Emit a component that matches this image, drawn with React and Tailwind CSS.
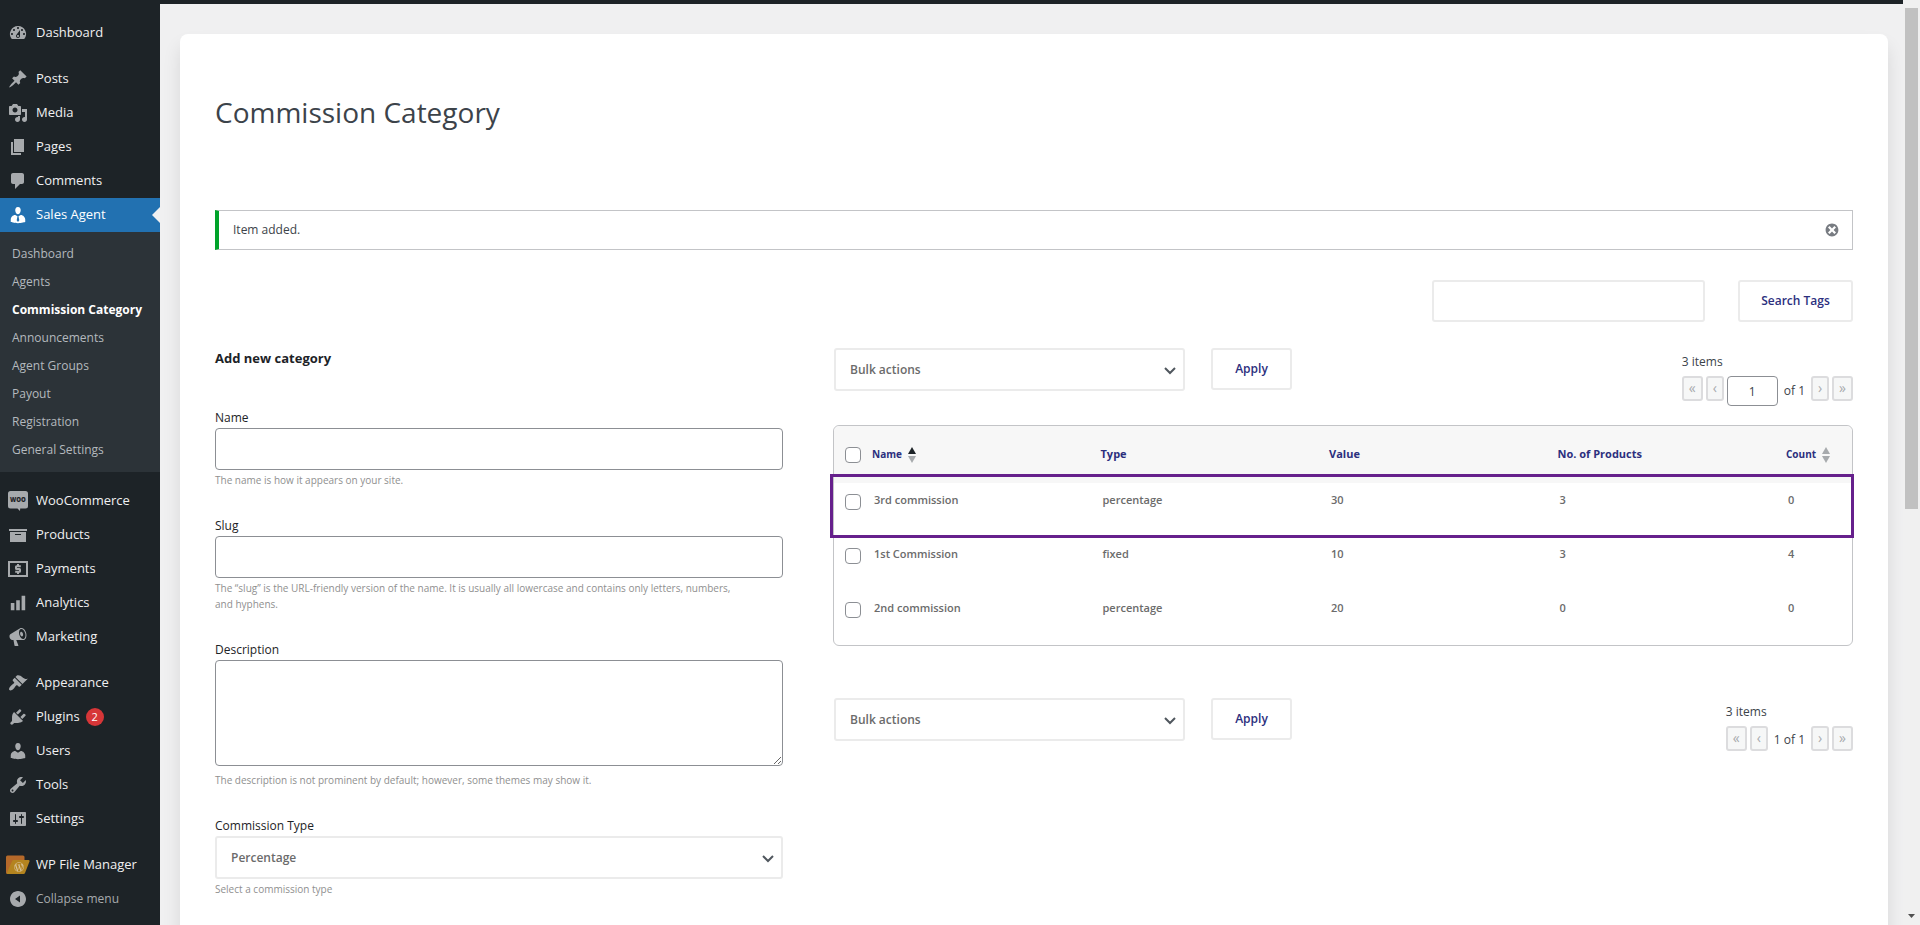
import React, { useState } from 'react';
import { FaWordpressSimple } from 'react-icons/fa';

const ICONS = {
  dashboard: 'M3.76 16h12.48A7.998 7.998 0 0 0 10 3a7.998 7.998 0 0 0-6.24 13zM10 4c.55 0 1 .45 1 1s-.45 1-1 1-1-.45-1-1 .45-1 1-1zM6 6c.55 0 1 .45 1 1s-.45 1-1 1-1-.45-1-1 .45-1 1-1zm8 0c.55 0 1 .45 1 1s-.45 1-1 1-1-.45-1-1 .45-1 1-1zm-5.37 5.55L12 7v6c0 1.1-.9 2-2 2s-2-.9-2-2c0-.57.24-1.08.63-1.45zM4 10c.55 0 1 .45 1 1s-.45 1-1 1-1-.45-1-1 .45-1 1-1zm12 0c.55 0 1 .45 1 1s-.45 1-1 1-1-.45-1-1 .45-1 1-1zm-5 3c0-.55-.45-1-1-1s-1 .45-1 1 .45 1 1 1 1-.45 1-1z',
  post: 'M10.44 3.02l1.82-1.82 6.36 6.35-1.83 1.82c-1.05-.68-2.48-.57-3.41.36l-.75.75c-.92.93-1.04 2.35-.35 3.41l-1.83 1.82-2.41-2.41-2.8 2.79c-.42.42-3.38 2.71-3.8 2.29s1.86-3.39 2.28-3.81l2.79-2.79L4.1 9.36l1.83-1.82c1.05.69 2.48.57 3.4-.36l.75-.75c.93-.92 1.05-2.35.36-3.41z',
  media: 'M13 11V4c0-.55-.45-1-1-1h-1.67L9 1H5L3.67 3H2c-.55 0-1 .45-1 1v7c0 .55.45 1 1 1h10c.55 0 1-.45 1-1zM7 4.5c1.38 0 2.5 1.12 2.5 2.5S8.38 9.5 7 9.5 4.5 8.38 4.5 7 5.62 4.5 7 4.5zM14 6h5v10.5c0 1.38-1.12 2.5-2.5 2.5S14 17.88 14 16.5s1.12-2.5 2.5-2.5c.17 0 .34.02.5.05V9h-3V6zm-4 8.05V13h2v3.5c0 1.38-1.12 2.5-2.5 2.5S7 17.88 7 16.5 8.12 14 9.5 14c.17 0 .34.02.5.05z',
  page: 'M6 15V2h10v13H6zm-1 1h8v2H3V5h2v11z',
  comments: 'M5 2h9c1.1 0 2 .9 2 2v7c0 1.1-.9 2-2 2h-2l-5 5v-5H5c-1.1 0-2-.9-2-2V4c0-1.1.9-2 2-2z',
  agent: 'M10 9.25c-2.27 0-2.73-3.44-2.73-3.44C7 4.02 7.82 2 9.97 2c2.16 0 2.98 2.02 2.71 3.81 0 0-.41 3.44-2.68 3.44zM7.23 10L9.5 11.3l-.8 3.9L10 17l1.3-1.8-.8-3.900L12.720 10c2.390 0 4.520 2.330 4.520 4.530v2.490s-3.650 1.130-7.240 1.130c-3.650 0-7.240-1.130-7.240-1.130v-2.490c0-2.250 1.940-4.480 4.470-4.530z',
  archive: 'M19 4v2H1V4h18zM2 7h16v10H2V7zm11 3V9H7v1h6z',
  chart: 'M18 18V2h-4v16h4zm-6 0V7H8v11h4zm-6 0v-8H2v8h4z',
  megaphone: 'M18.15 5.94c.46 1.62.38 3.22-.02 4.48-.42 1.28-1.26 2.18-2.3 2.48-.16.06-.26.06-.4.06-.06.02-.12.02-.18.02-.06.02-.14.02-.22.02h-6.8l2.22 5.5c.02.14-.06.26-.14.34-.08.1-.24.16-.34.16H6.95c-.1 0-.26-.06-.34-.16-.08-.08-.16-.2-.14-.34l-1-5.5H4.25l-.02-.02c-.5.06-1.08-.18-1.54-.62s-.88-1.08-1.06-1.88c-.24-.8-.2-1.56-.02-2.2.18-.62.58-1.08 1.06-1.3l.02-.02 9-5.4c.1-.06.18-.1.24-.16.06-.04.14-.08.24-.12.16-.08.28-.12.5-.18 1.04-.3 2.24.1 3.22.98s1.84 2.24 2.26 3.86zm-2.58 5.98h-.02c.4-.1.74-.34 1.04-.7.58-.7.86-1.76.86-3.04 0-.64-.1-1.3-.28-1.98-.34-1.36-1.02-2.5-1.78-3.24s-1.68-1.1-2.46-.88c-.82.22-1.4.96-1.7 2-.32 1.04-.28 2.36.06 3.72.38 1.36 1 2.5 1.8 3.24.78.74 1.62 1.1 2.48.88zm-2.54-7.08c.22-.04.42-.02.62.04.38.16.76.48 1.02 1s.42 1.2.42 1.78c0 .3-.04.56-.12.8-.18.48-.44.84-.86.94-.34.1-.8-.06-1.14-.4s-.64-.86-.78-1.5c-.18-.62-.12-1.24.02-1.72s.48-.84.82-.94z',
  appearance: 'M14.48 11.06L7.41 3.99l1.5-1.5c.5-.56 2.3-.47 3.51.32 1.21.8 1.43 1.28 2.91 2.1 1.18.64 2.45 1.26 4.45.85zm-.71.71L6.7 4.7 4.93 6.47c-.39.39-.39 1.02 0 1.41l1.06 1.06c.39.39.39 1.03 0 1.42-.6.6-1.43 1.11-2.21 1.69-.35.26-.7.53-1.01.84C1.43 14.23.4 16.08 1.4 17.07c.99 1 2.84-.03 4.18-1.36.31-.31.58-.66.85-1.02.57-.78 1.08-1.61 1.69-2.21.39-.39 1.02-.39 1.41 0l1.06 1.06c.39.39 1.02.39 1.41 0z',
  plugins: 'M13.11 4.36L9.87 7.6 8 5.73l3.24-3.24c.35-.34 1.05-.2 1.56.32.52.51.66 1.21.31 1.55zm-8 1.77l.91-1.12 9.01 9.01-1.19.84c-.71.71-2.63 1.16-3.82 1.16H6.14L4.9 17.26c-.59.59-1.54.59-2.12 0-.59-.58-.59-1.53 0-2.12l1.24-1.24v-3.88c0-1.13.4-3.19 1.09-3.89zm7.26 3.97l3.24-3.24c.34-.35 1.04-.21 1.55.31.52.51.66 1.21.31 1.55l-3.24 3.25z',
  users: 'M10 9.25c-2.27 0-2.73-3.44-2.73-3.44C7 4.02 7.82 2 9.97 2c2.16 0 2.98 2.02 2.71 3.81 0 0-.41 3.44-2.68 3.44zm0 2.57L12.72 10c2.39 0 4.52 2.33 4.52 4.53v2.49s-3.65 1.13-7.24 1.13c-3.65 0-7.24-1.13-7.24-1.13v-2.49c0-2.25 1.94-4.48 4.47-4.48z',
  tools: 'M16.68 9.77c-1.34 1.34-3.3 1.67-4.95.99l-5.41 6.52c-.99.99-2.59.99-3.58 0s-.99-2.59 0-3.57l6.52-5.42c-.68-1.65-.35-3.61.99-4.95 1.28-1.28 3.12-1.62 4.72-1.06l-2.89 2.89 2.82 2.82 2.86-2.87c.53 1.58.18 3.39-1.08 4.65zM3.81 16.21c.4.39 1.04.39 1.43 0 .4-.4.4-1.04 0-1.43-.39-.4-1.03-.4-1.43 0-.39.39-.39 1.03 0 1.43z',
  settings: 'M18 16V4c0-.55-.45-1-1-1H3c-.55 0-1 .45-1 1v12c0 .55.45 1 1 1h14c.55 0 1-.45 1-1zM8 11h1c.55 0 1 .45 1 1s-.45 1-1 1H8v1.5c0 .28-.22.5-.5.5s-.5-.22-.5-.5V13H6c-.55 0-1-.45-1-1s.45-1 1-1h1V5.5c0-.28.22-.5.5-.5s.5.22.5.5V11zm5-2h-1c-.55 0-1-.45-1-1s.45-1 1-1h1V5.5c0-.28.22-.5.5-.5s.5.22.5.5V7h1c.55 0 1 .45 1 1s-.45 1-1 1h-1v5.5c0 .28-.22.5-.5.5s-.5-.22-.5-.5V9z',
  collapse: 'M10 2c4.42 0 8 3.58 8 8s-3.58 8-8 8-8-3.58-8-8 3.58-8 8-8zM12 6.5v7L7 10z',
  dismiss: 'M10 2c4.42 0 8 3.58 8 8s-3.58 8-8 8-8-3.58-8-8 3.58-8 8-8zm5 11l-3-3 3-3-2-2-3 3-3-3-2 2 3 3-3 3 2 2 3-3 3 3z'
};

const Icon = ({ name, size = 20 }) => (
  <svg width={size} height={size} viewBox="0 0 20 20" fill="currentColor" fillRule="evenodd" aria-hidden="true">
    <path d={ICONS[name]} />
  </svg>
);

const WooIcon = () => (
  <svg width="20" height="20" viewBox="0 0 20 20" aria-hidden="true">
    <path fill="currentColor" d="M2.5 0h15A2.5 2.5 0 0 1 20 2.5v12.5a2.5 2.5 0 0 1-2.5 2.500h-5.300l-.2 2.500-2.500-2.500h-7A2.5 2.5 0 0 1 0 15V2.5A2.5 2.5 0 0 1 2.5 0z" />
    <text x="10" y="11" textAnchor="middle" fontSize="6" fontWeight="800" fontFamily="Open Sans, sans-serif" fill="#1d2327">
      WOO
    </text>
  </svg>
);

const PaymentsIcon = () => (
  <svg width="20" height="20" viewBox="0 0 20 20" fill="none" stroke="currentColor" strokeWidth="2" aria-hidden="true">
    <rect x="1" y="3" width="18" height="14" />
    <path d="M12.8 7.3H8.500a.5.5 0 0 0-.5.5v1.700a.5.5 0 0 0 .5.5h3a.5.5 0 0 1 .5.5v1.700a.5.5 0 0 1-.5.5H7.200M10 5v2.300M10 12.700V15" />
  </svg>
);

const FileManagerIcon = () => (
  <span className="relative block">
    <svg width="24" height="20" viewBox="0 0 24 20" aria-hidden="true">
      <path fill="#b5692a" d="M1.500.5H17a1.500 1.500 0 0 1 1.500 1.500v4L14 19H1.500A1.500 1.500 0 0 1 0 17.500V2A1.500 1.500 0 0 1 1.500.5z" />
      <path fill="#b4841f" d="M8 5h14.500a1 1 0 0 1 1 1.500l-4.500 11.500a1.500 1.500 0 0 1-1.400 1H2a1 1 0 0 1-1-1.400L6 6.200A2 2 0 0 1 8 5z" />
    </svg>
    <FaWordpressSimple size={10} className="absolute left-2 top-[7px] text-[#d8c39a]" />
  </span>
);

const menuGroups = [
  [{ label: 'Dashboard', icon: <Icon name="dashboard" /> }],
  [
    { label: 'Posts', icon: <Icon name="post" /> },
    { label: 'Media', icon: <Icon name="media" /> },
    { label: 'Pages', icon: <Icon name="page" /> },
    { label: 'Comments', icon: <Icon name="comments" /> },
    {
      label: 'Sales Agent',
      icon: <Icon name="agent" />,
      children: [
        'Dashboard',
        'Agents',
        'Commission Category',
        'Announcements',
        'Agent Groups',
        'Payout',
        'Registration',
        'General Settings'
      ]
    }
  ],
  [
    { label: 'WooCommerce', icon: <WooIcon /> },
    { label: 'Products', icon: <Icon name="archive" /> },
    { label: 'Payments', icon: <PaymentsIcon /> },
    { label: 'Analytics', icon: <Icon name="chart" size={18} /> },
    { label: 'Marketing', icon: <Icon name="megaphone" /> }
  ],
  [
    { label: 'Appearance', icon: <Icon name="appearance" /> },
    { label: 'Plugins', icon: <Icon name="plugins" />, badge: 2 },
    { label: 'Users', icon: <Icon name="users" /> },
    { label: 'Tools', icon: <Icon name="tools" /> },
    { label: 'Settings', icon: <Icon name="settings" /> }
  ],
  [{ label: 'WP File Manager', icon: <FileManagerIcon /> }]
];

const rows = [
  { id: 3, name: '3rd commission', type: 'percentage', value: 30, products: 3, count: 0 },
  { id: 1, name: '1st Commission', type: 'fixed', value: 10, products: 3, count: 4 },
  { id: 2, name: '2nd commission', type: 'percentage', value: 20, products: 0, count: 0 }
];

const MenuItem = ({ item }) => {
  const open = Boolean(item.children);

  return (
    <li>
      <a
        href="#"
        className={`relative flex h-[34px] items-center text-[13px] font-medium ${open ? 'bg-[#2271b1] text-white' : 'text-[#f0f0f1]'}`}
      >
        <span className={`flex w-9 items-center justify-center ${open ? 'text-white' : 'text-[#a7aaad]'}`}>
          {item.icon}
        </span>
        {item.label}
        {item.badge && (
          <span className="ml-[6px] flex h-[18px] w-[18px] items-center justify-center rounded-full bg-[#d63638] text-[11px] text-white">
            {item.badge}
          </span>
        )}
        {open && (
          <span className="absolute right-0 top-[9px] border-y-8 border-r-8 border-y-transparent border-r-[#f0f0f1]" />
        )}
      </a>
      {open && (
        <ul className="bg-[#2c3338] py-2">
          {item.children.map((child) => (
            <li key={child}>
              <a
                href="#"
                className={`flex h-7 items-center whitespace-nowrap pl-3 text-xs ${
                  child === 'Commission Category' ? 'font-bold text-white' : 'font-medium text-[#b4b9be]'
                }`}
              >
                {child}
              </a>
            </li>
          ))}
        </ul>
      )}
    </li>
  );
};

const Sidebar = () => (
  <nav className="w-40 shrink-0 bg-[#1d2327] pt-3">
    {menuGroups.map((group, i) => (
      <ul key={i} className="mb-3 last-of-type:mb-0">
        {group.map((item) => (
          <MenuItem key={item.label} item={item} />
        ))}
      </ul>
    ))}
    <button className="flex h-[34px] w-full items-center text-xs text-[#a7aaad]">
      <span className="flex w-9 justify-center">
        <Icon name="collapse" />
      </span>
      Collapse menu
    </button>
  </nav>
);

const Select = ({ id, label, options, className }) => (
  <div className={`relative ${className}`}>
    <select
      id={id}
      aria-label={label}
      className="h-[43px] w-full appearance-none rounded-[3px] border-2 border-[#ebebeb] bg-white pl-[14px] pr-8 text-xs font-semibold text-[#6b6b6b]"
    >
      {options.map((option) => (
        <option key={option}>{option}</option>
      ))}
    </select>
    <svg
      className="pointer-events-none absolute right-[9px] top-[19px]"
      width="12"
      height="8"
      viewBox="0 0 12 8"
      fill="none"
      stroke="#50575e"
      strokeWidth="2"
      aria-hidden="true"
    >
      <path d="M1 1l5 5 5-5" />
    </svg>
  </div>
);

const Field = ({ id, label, help, helpClass = 'mt-[2px]', children }) => (
  <div className="mb-7">
    <label htmlFor={id} className="block text-xs leading-5 text-[#1d2327]">
      {label}
    </label>
    {children}
    <p className={`max-w-[530px] text-[10px] leading-4 text-[#8f8f8f] ${helpClass}`}>{help}</p>
  </div>
);

const PageButton = ({ label, wide, children }) => (
  <button
    disabled
    aria-label={label}
    className={`flex h-[25px] items-center justify-center rounded-[3px] border-2 border-[#dcdcde] bg-[#f6f7f7] pb-[2px] text-sm text-[#a7aaad] ${wide ? 'w-[21px]' : 'w-[18px]'}`}
  >
    {children}
  </button>
);

const TableNav = ({ position }) => (
  <div className="flex items-start">
    <Select
      id={`bulk-${position}`}
      label="Bulk actions"
      options={['Bulk actions', 'Delete']}
      className="ml-px w-[351px]"
    />
    <button className="ml-[26px] h-[42px] w-[81px] rounded-[3px] border-2 border-[#ebebeb] bg-white text-xs font-semibold text-[#2c2f7e]">
      Apply
    </button>
    <div className="ml-auto pt-1 text-xs text-[#3c434a]">
      <p className="leading-5">3 items</p>
      <div className="mt-1 flex items-start gap-[3px]">
        <PageButton label="First page" wide>«</PageButton>
        <PageButton label="Previous page">‹</PageButton>
        {position === 'top' ? (
          <>
            <input
              aria-label="Current page"
              defaultValue="1"
              className="h-[30px] w-[51px] rounded-[4px] border border-[#8c8f94] bg-white text-center text-xs"
            />
            <span className="px-[3px] leading-[30px]">of 1</span>
          </>
        ) : (
          <span className="px-[3px] leading-7">1 of 1</span>
        )}
        <PageButton label="Next page">›</PageButton>
        <PageButton label="Last page" wide>»</PageButton>
      </div>
    </div>
  </div>
);

const SortArrows = ({ up = '#a7aaad' }) => (
  <svg width="8" height="16" viewBox="0 0 8 16" aria-hidden="true">
    <path fill={up} d="M4 0l4 7H0z" />
    <path fill="#a7aaad" d="M4 16l4-7H0z" />
  </svg>
);

const Checkbox = ({ label, ...props }) => (
  <input
    type="checkbox"
    aria-label={label}
    className="block h-4 w-4 appearance-none rounded-[4px] border border-[#8c8f94] bg-white checked:bg-[#2271b1]"
    {...props}
  />
);

const CategoryTable = () => {
  const [selected, setSelected] = useState([]);

  const toggle = (id) => {
    setSelected(selected.includes(id) ? selected.filter((s) => s !== id) : [...selected, id]);
  };

  const toggleAll = () => {
    setSelected(selected.length === rows.length ? [] : rows.map((r) => r.id));
  };

  return (
    <div className="relative mt-[19px] rounded-[6px] border border-[#c3c4c7]">
      <table className="w-full table-fixed text-left">
        <colgroup>
          <col className="w-[38px]" />
          <col />
          <col />
          <col />
          <col />
          <col className="w-[66px]" />
        </colgroup>
        <thead>
          <tr className="h-[57px] bg-[#f7f7f7] text-[11px] font-bold text-[#2c2f7e]">
            <th className="rounded-tl-[6px] pl-[11px]">
              <Checkbox label="Select all" checked={selected.length === rows.length} onChange={toggleAll} />
            </th>
            <th>
              <a href="#" className="flex items-center gap-[6px] text-[10px]">
                Name <SortArrows up="#1d2327" />
              </a>
            </th>
            <th>Type</th>
            <th>Value</th>
            <th>No. of Products</th>
            <th className="rounded-tr-[6px]">
              <a href="#" className="flex items-center gap-[6px] text-[10px]">
                Count <SortArrows />
              </a>
            </th>
          </tr>
        </thead>
        <tbody>
          {rows.map((row) => (
            <tr key={row.id} className="h-[54px] align-top text-[11px] font-semibold leading-[18px] text-[#6b6b6b]">
              <td className="pl-[11px] pt-[11px]">
                <Checkbox
                  label={`Select ${row.name}`}
                  checked={selected.includes(row.id)}
                  onChange={() => toggle(row.id)}
                />
              </td>
              <td className="pl-[2px] pt-2">{row.name}</td>
              <td className="pl-[2px] pt-2">{row.type}</td>
              <td className="pl-[2px] pt-2">{row.value}</td>
              <td className="pl-[2px] pt-2">{row.products}</td>
              <td className="pl-[2px] pt-2">{row.count}</td>
            </tr>
          ))}
        </tbody>
      </table>
      {/* highlight around the newly added row */}
      <div className="pointer-events-none absolute -left-1 -right-[2px] top-12 h-16 border-[3px] border-[#66208c]" />
    </div>
  );
};

const inputClass = 'block h-[42px] w-full rounded-[4px] border border-[#8c8f94] bg-white px-2 text-xs';

const CategoryForm = () => (
  <form>
    <h2 className="mb-10 text-[13px] font-bold leading-5 text-[#1d2327]">Add new category</h2>
    <Field id="name" label="Name" help="The name is how it appears on your site.">
      <input id="name" type="text" className={inputClass} />
    </Field>
    <Field
      id="slug"
      label="Slug"
      help="The “slug” is the URL-friendly version of the name. It is usually all lowercase and contains only letters, numbers, and hyphens."
    >
      <input id="slug" type="text" className={inputClass} />
    </Field>
    <Field
      id="description"
      label="Description"
      help="The description is not prominent by default; however, some themes may show it."
      helpClass="mt-[6px]"
    >
      <textarea
        id="description"
        className="block h-[106px] w-full resize rounded-[4px] border border-[#8c8f94] bg-white px-2 text-xs"
      />
    </Field>
    <Field id="commission-type" label="Commission Type" help="Select a commission type">
      <Select id="commission-type" options={['Percentage', 'Fixed']} className="w-full" />
    </Field>
  </form>
);

const Scrollbar = () => (
  <div className="flex w-[17px] shrink-0 flex-col items-center justify-between bg-[#f0f0f0] pb-[7px] pt-2" aria-hidden="true">
    <div className="h-[55%] w-[13px] bg-[#c1c1c1]" />
    <svg width="7" height="4" viewBox="0 0 7 4">
      <path fill="#505050" d="M0 0h7L3.500 4z" />
    </svg>
  </div>
);

const App = () => {
  const [notice, setNotice] = useState(true);

  return (
    <div className="flex h-screen overflow-hidden bg-[#f0f0f1] font-['Open_Sans','Noto_Sans',sans-serif]">
      <div className="flex min-w-0 flex-1 flex-col">
        <div className="h-1 shrink-0 bg-[#1d2327]" />
        <div className="flex min-h-0 flex-1">
          <Sidebar />
          <main className="min-w-0 flex-1 overflow-y-auto pl-5 pr-[15px] pt-[30px] [scrollbar-width:none]">
            <div className="rounded-lg bg-white px-[35px] pb-20 pt-[58px] shadow-[0_12px_18px_#0000001a]">
              <h1 className="text-[28px] leading-10 text-[#3c434a]">Commission Category</h1>

              <div className="mt-[78px]">
                {notice && (
                  <div className="flex h-10 items-center justify-between border border-l-4 border-[#c3c4c7] border-l-[#00a32a] pl-[14px] pr-3 text-xs text-[#3c434a]">
                    <p>Item added.</p>
                    <button aria-label="Dismiss this notice" className="text-[#787c82]" onClick={() => setNotice(false)}>
                      <Icon name="dismiss" size={16} />
                    </button>
                  </div>
                )}
              </div>

              <div className="mt-[30px] flex justify-end gap-[33px]">
                <input
                  type="search"
                  aria-label="Search Tags"
                  className="h-[42px] w-[273px] rounded-[3px] border-2 border-[#ebebeb] bg-white px-3 text-xs"
                />
                <button className="h-[42px] w-[115px] rounded-[3px] border-2 border-[#ebebeb] bg-white text-xs font-semibold text-[#2c2f7e]">
                  Search Tags
                </button>
              </div>

              <div className="mt-[26px] grid grid-cols-[568fr_1020fr] gap-[50px]">
                <CategoryForm />
                <div>
                  <TableNav position="top" />
                  <CategoryTable />
                  <div className="mt-[52px]">
                    <TableNav position="bottom" />
                  </div>
                </div>
              </div>
            </div>
          </main>
        </div>
      </div>
      <Scrollbar />
    </div>
  );
};

export default App;
